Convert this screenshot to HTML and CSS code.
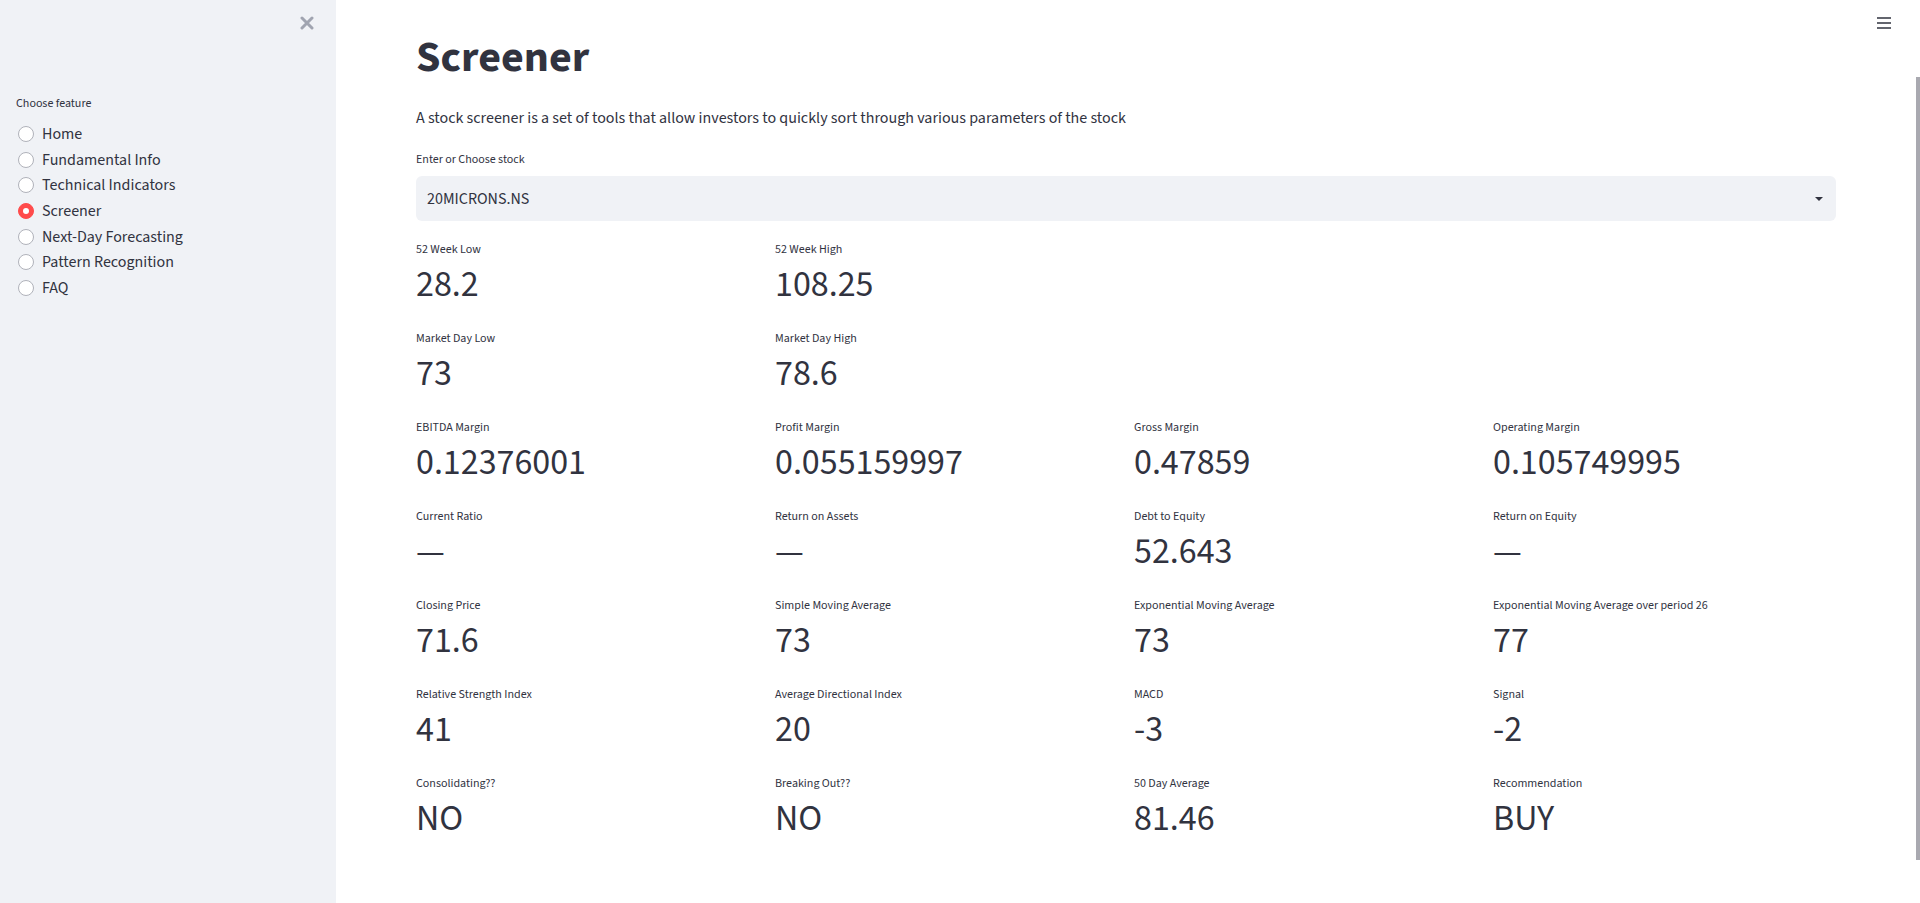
FILE: index.html
```html
<!DOCTYPE html>
<html lang="en">
<head>
<meta charset="utf-8">
<title>Screener</title>
<link rel="stylesheet" href="styles.css">
</head>
<body>
<div class="app">
  <aside class="sidebar">
    <div class="sb-top">
      <button class="close-btn" aria-label="Close sidebar">
        <svg width="14" height="14" viewBox="0 0 14 14"><path d="M2 2 L12 12 M12 2 L2 12" stroke="#a0a4b0" stroke-width="3" stroke-linecap="round"/></svg>
      </button>
    </div>
    <div class="radio-group">
      <div class="widget-label">Choose feature</div>
      <label class="radio"><span class="circle"></span><span class="radio-text">Home</span></label>
      <label class="radio"><span class="circle"></span><span class="radio-text">Fundamental Info</span></label>
      <label class="radio"><span class="circle"></span><span class="radio-text">Technical Indicators</span></label>
      <label class="radio checked"><span class="circle"></span><span class="radio-text">Screener</span></label>
      <label class="radio"><span class="circle"></span><span class="radio-text">Next-Day Forecasting</span></label>
      <label class="radio"><span class="circle"></span><span class="radio-text">Pattern Recognition</span></label>
      <label class="radio"><span class="circle"></span><span class="radio-text">FAQ</span></label>
    </div>
  </aside>
  <main class="main">
    <button class="menu-btn" aria-label="Menu">
      <svg width="14" height="12" viewBox="0 0 14 12"><path d="M0 1 H14 M0 6 H14 M0 11 H14" stroke="#31333f" stroke-width="1.6"/></svg>
    </button>
    <div class="block">
      <h1 class="title">Screener</h1>
      <p class="desc">A stock screener is a set of tools that allow investors to quickly sort through various parameters of the stock</p>
      <div class="select-widget">
        <div class="widget-label">Enter or Choose stock</div>
        <div class="select"><span class="select-value">20MICRONS.NS</span><span class="caret"></span></div>
      </div>
      <div class="metrics">
        <div class="metric"><div class="m-label">52 Week Low</div><div class="m-value">28.2</div></div>
        <div class="metric"><div class="m-label">52 Week High</div><div class="m-value">108.25</div></div>
        <div class="metric empty"></div>
        <div class="metric empty"></div>

        <div class="metric"><div class="m-label">Market Day Low</div><div class="m-value">73</div></div>
        <div class="metric"><div class="m-label">Market Day High</div><div class="m-value">78.6</div></div>
        <div class="metric empty"></div>
        <div class="metric empty"></div>

        <div class="metric"><div class="m-label">EBITDA Margin</div><div class="m-value">0.12376001</div></div>
        <div class="metric"><div class="m-label">Profit Margin</div><div class="m-value">0.055159997</div></div>
        <div class="metric"><div class="m-label">Gross Margin</div><div class="m-value">0.47859</div></div>
        <div class="metric"><div class="m-label">Operating Margin</div><div class="m-value">0.105749995</div></div>

        <div class="metric"><div class="m-label">Current Ratio</div><div class="m-value">—</div></div>
        <div class="metric"><div class="m-label">Return on Assets</div><div class="m-value">—</div></div>
        <div class="metric"><div class="m-label">Debt to Equity</div><div class="m-value">52.643</div></div>
        <div class="metric"><div class="m-label">Return on Equity</div><div class="m-value">—</div></div>

        <div class="metric"><div class="m-label">Closing Price</div><div class="m-value">71.6</div></div>
        <div class="metric"><div class="m-label">Simple Moving Average</div><div class="m-value">73</div></div>
        <div class="metric"><div class="m-label">Exponential Moving Average</div><div class="m-value">73</div></div>
        <div class="metric"><div class="m-label">Exponential Moving Average over period 26</div><div class="m-value">77</div></div>

        <div class="metric"><div class="m-label">Relative Strength Index</div><div class="m-value">41</div></div>
        <div class="metric"><div class="m-label">Average Directional Index</div><div class="m-value">20</div></div>
        <div class="metric"><div class="m-label">MACD</div><div class="m-value">-3</div></div>
        <div class="metric"><div class="m-label">Signal</div><div class="m-value">-2</div></div>

        <div class="metric"><div class="m-label">Consolidating??</div><div class="m-value">NO</div></div>
        <div class="metric"><div class="m-label">Breaking Out??</div><div class="m-value">NO</div></div>
        <div class="metric"><div class="m-label">50 Day Average</div><div class="m-value">81.46</div></div>
        <div class="metric"><div class="m-label">Recommendation</div><div class="m-value">BUY</div></div>
      </div>
    </div>
    <div class="scroll-thumb"></div>
  </main>
</div>
</body>
</html>
```

FILE: styles.css
```css
* { box-sizing: border-box; }
html, body { margin: 0; padding: 0; }
body {
  font-family: "Source Sans 3", "Source Sans Pro", Lato, sans-serif;
  color: #31333f;
  background: #ffffff;
}
.app { display: flex; height: 903px; overflow: hidden; }

.sidebar {
  width: 336px;
  flex: none;
  background: #f0f2f6;
  padding: 16px 16px 0 16px;
  display: flex;
  flex-direction: column;
}
.sb-top { display: flex; justify-content: flex-end; padding-right: 6px; height: 78px; }
.close-btn { border: 0; background: transparent; padding: 0; width: 14px; height: 14px; cursor: pointer; }
.close-btn svg { display: block; }

.widget-label { font-size: 12px; line-height: 20px; color: #31333f; }
.radio-group { display: flex; flex-direction: column; }
.radio-group .widget-label { margin-bottom: 7px; }
.radio { display: flex; align-items: center; height: 25.7px; font-size: 16px; cursor: pointer; }
.circle {
  width: 16px; height: 16px; border-radius: 50%;
  border: 1.5px solid #b0b2ba; background: #fff;
  margin-left: 2px; margin-right: 8px; flex: none; position: relative;
}
.radio.checked .circle { background: #ff4b4b; border-color: #ff4b4b; }
.radio.checked .circle::after {
  content: ""; position: absolute; left: 50%; top: 50%;
  width: 6px; height: 6px; margin: -3px 0 0 -3px; border-radius: 50%; background: #fff;
}

.main { flex: 1; position: relative; padding: 26px 84px 0 80px; }
.menu-btn { position: absolute; top: 17px; right: 29px; border: 0; background: transparent; padding: 0; }
.menu-btn svg { display: block; }
.scroll-thumb { position: absolute; right: 0; top: 77px; width: 4px; height: 783px; background: #a9a9b0; }

.title { margin: 0; font-size: 44px; line-height: 64px; font-weight: 700; }
.desc { margin: 16px 0 0; font-size: 16px; line-height: 24px; }
.select-widget { margin-top: 20px; }
.select-widget .widget-label { margin-bottom: 6px; }
.select {
  height: 45px; background: #f0f2f6; border-radius: 6px;
  display: flex; align-items: center; justify-content: space-between;
  padding: 0 13px 0 11px; font-size: 16px;
}
.caret { width: 0; height: 0; border-left: 4px solid transparent; border-right: 4px solid transparent; border-top: 4px solid #31333f; }

.metrics {
  margin-top: 17px;
  display: grid;
  grid-template-columns: repeat(4, 1fr);
  column-gap: 16px;
  row-gap: 20px;
}
.metric { height: 69px; }
.m-label { font-size: 12px; line-height: 24px; height: 24px; white-space: nowrap; }
.m-value { font-size: 36px; line-height: 45px; white-space: nowrap; }
```
